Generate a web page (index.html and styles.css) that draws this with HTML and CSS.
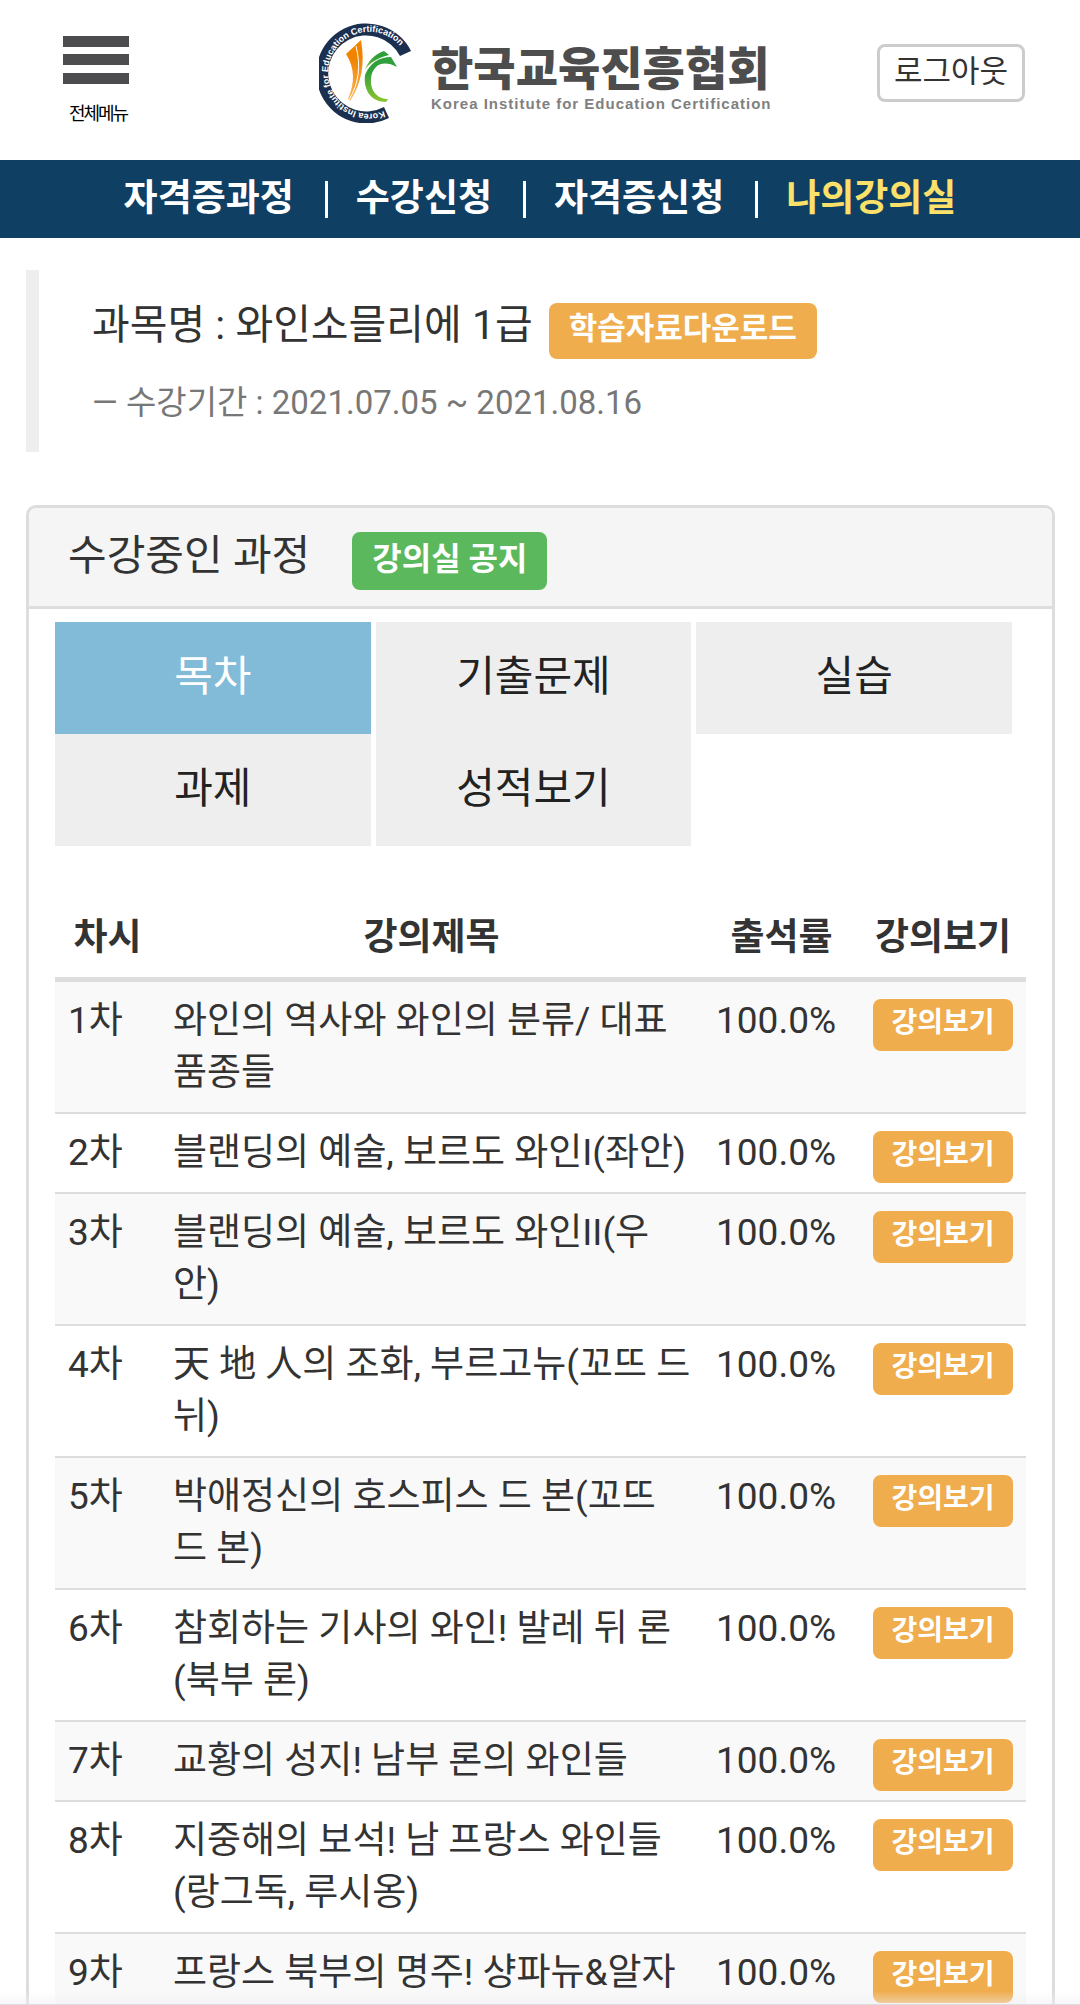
FILE: index.html
```
<!DOCTYPE html>
<html lang="ko">
<head>
    <meta charset="UTF-8">
    <meta name="viewport" content="width=device-width, initial-scale=1.0">
    <title>한국교육진흥협회</title>
    <link rel="stylesheet" href="styles.css">
</head>
<body>

<header class="header">
    <button type="button" class="menu-btn">
        <svg class="menu-icon" viewBox="0 0 66 48" aria-hidden="true">
            <path d="M0 0h66v11H0zM0 18h66v11H0zM0 37h66v11H0z" fill="#4d4d4f"/>
        </svg>
        <span>전체메뉴</span>
    </button>

    <a href="#" class="logo">
        <svg class="logo-mark" viewBox="0 0 92 100" aria-hidden="true">
            <defs>
                <linearGradient id="orange" x1="0" y1="0" x2="0" y2="1">
                    <stop offset="0.3" stop-color="#f08300"/>
                    <stop offset="1" stop-color="#fbb75c"/>
                </linearGradient>
                <linearGradient id="green" x1="0" y1="0" x2="0" y2="1">
                    <stop offset="0.3" stop-color="#2e9f3b"/>
                    <stop offset="1" stop-color="#8cc52f"/>
                </linearGradient>
                <path id="ring-text" d="M65 88A41 41 0 1 1 86 30"/>
            </defs>
            <path d="M92 28A50 50 0 1 0 70 95L65 84A38 38 0 1 1 81 33Z" fill="#1b2f4e"/>
            <text class="ring-label"><textPath href="#ring-text">Korea Institute for Education Certification</textPath></text>
            <path d="M27 31L42 17C46 40 43 60 31 78L29 76C36 60 36 45 27 31Z" fill="url(#orange)"/>
            <path d="M37 23C42 43 40 60 30 77" fill="none" stroke="#fff" stroke-width="1"/>
            <path d="M46 47C49 38 56 31 65 28L70 32C58 35 49 41 46 47Z" fill="url(#green)"/>
            <path d="M46 52C51 40 60 34 72 34L78 44C64 36 53 42 52 56C51 66 57 76 69 76L67 79C53 79 44 68 46 52Z" fill="url(#green)"/>
        </svg>
        <span class="logo-text">
            <strong>한국교육진흥협회</strong>
            <small>Korea Institute for Education Certification</small>
        </span>
    </a>

    <button type="button" class="logout-btn">로그아웃</button>
</header>

<nav class="nav">
    <a href="#">자격증과정</a>
    <a href="#">수강신청</a>
    <a href="#">자격증신청</a>
    <a href="#" class="active">나의강의실</a>
</nav>

<main>
    <blockquote class="course">
        <p>과목명 : 와인소믈리에 1급 <a href="#" class="label label-warning">학습자료다운로드</a></p>
        <footer>— 수강기간 : 2021.07.05 ~ 2021.08.16</footer>
    </blockquote>

    <section class="panel">
        <div class="panel-heading">
            <h3>수강중인 과정</h3>
            <a href="#" class="label label-success">강의실 공지</a>
        </div>
        <div class="panel-body">
            <div class="tabs">
                <button type="button" class="tab active">목차</button>
                <button type="button" class="tab">기출문제</button>
                <button type="button" class="tab">실습</button>
                <button type="button" class="tab">과제</button>
                <button type="button" class="tab">성적보기</button>
            </div>

            <table class="lectures">
                <thead>
                    <tr>
                        <th class="col-no">차시</th>
                        <th>강의제목</th>
                        <th class="col-rate">출석률</th>
                        <th class="col-view">강의보기</th>
                    </tr>
                </thead>
                <tbody>
                    <tr>
                        <td>1차</td>
                        <td>와인의 역사와 와인의 분류/ 대표 품종들</td>
                        <td>100.0%</td>
                        <td><a href="#" class="label label-warning">강의보기</a></td>
                    </tr>
                    <tr>
                        <td>2차</td>
                        <td>블랜딩의 예술, 보르도 와인I(좌안)</td>
                        <td>100.0%</td>
                        <td><a href="#" class="label label-warning">강의보기</a></td>
                    </tr>
                    <tr>
                        <td>3차</td>
                        <td>블랜딩의 예술, 보르도 와인II(우안)</td>
                        <td>100.0%</td>
                        <td><a href="#" class="label label-warning">강의보기</a></td>
                    </tr>
                    <tr>
                        <td>4차</td>
                        <td>天 地 人의 조화, 부르고뉴(꼬뜨 드 뉘)</td>
                        <td>100.0%</td>
                        <td><a href="#" class="label label-warning">강의보기</a></td>
                    </tr>
                    <tr>
                        <td>5차</td>
                        <td>박애정신의 호스피스 드 본(꼬뜨 드 본)</td>
                        <td>100.0%</td>
                        <td><a href="#" class="label label-warning">강의보기</a></td>
                    </tr>
                    <tr>
                        <td>6차</td>
                        <td>참회하는 기사의 와인! 발레 뒤 론(북부 론)</td>
                        <td>100.0%</td>
                        <td><a href="#" class="label label-warning">강의보기</a></td>
                    </tr>
                    <tr>
                        <td>7차</td>
                        <td>교황의 성지! 남부 론의 와인들</td>
                        <td>100.0%</td>
                        <td><a href="#" class="label label-warning">강의보기</a></td>
                    </tr>
                    <tr>
                        <td>8차</td>
                        <td>지중해의 보석! 남 프랑스 와인들(랑그독, 루시옹)</td>
                        <td>100.0%</td>
                        <td><a href="#" class="label label-warning">강의보기</a></td>
                    </tr>
                    <tr>
                        <td>9차</td>
                        <td>프랑스 북부의 명주! 샹파뉴&amp;알자</td>
                        <td>100.0%</td>
                        <td><a href="#" class="label label-warning">강의보기</a></td>
                    </tr>
                </tbody>
            </table>
        </div>
    </section>
</main>

<div class="bottom-shade"></div>

</body>
</html>
```
FILE: styles.css
```
* {
    padding: 0;
    margin: 0;
    box-sizing: border-box;
}
body {
    font-family: Roboto, "Noto Sans CJK KR", sans-serif;
    font-size: 37px;
    line-height: 52px;
    color: #333;
    background-color: #fff;
}
a {
    color: inherit;
    text-decoration: none;
}
button {
    font-family: inherit;
    border: none;
    background: none;
    cursor: pointer;
}

/* header */
.header {
    display: flex;
    align-items: flex-start;
    height: 160px;
    padding: 23px 55px 0 63px;
}
.menu-btn {
    width: 70px;
    padding-top: 13px;
    font-size: 18px;
    line-height: 26px;
    letter-spacing: -2px;
    white-space: nowrap;
}
.menu-icon {
    display: block;
    width: 66px;
    height: 48px;
    margin-bottom: 17px;
}
.logo {
    display: flex;
    gap: 20px;
    margin: 0 auto 0 186px;
}
.logo-mark {
    width: 92px;
    height: 100px;
}
.ring-label {
    font-family: "Liberation Sans", sans-serif;
    font-size: 9px;
    font-weight: bold;
    fill: #fff;
}
.logo-text {
    padding-top: 20px;
    color: #4d4d4d;
}
.logo-text strong,
.logo-text small {
    display: block;
    white-space: nowrap;
}
.logo-text strong {
    font-size: 46px;
    font-weight: 900;
    line-height: 52px;
}
.logo-text small {
    font-family: "Liberation Sans", sans-serif;
    font-size: 15px;
    font-weight: bold;
    line-height: 18px;
    letter-spacing: 1px;
    color: #808080;
}
.logout-btn {
    margin-top: 21px;
    padding: 2px 14px 4px;
    font-size: 31px;
    line-height: 46px;
    color: #333;
    border: 3px solid #ccc;
    border-radius: 8px;
}

/* main menu */
.nav {
    display: flex;
    justify-content: center;
    align-items: flex-start;
    height: 78px;
    padding-top: 13px;
    background-color: #0f4063;
    color: #fff;
    font-weight: bold;
}
.nav a {
    display: flex;
}
.nav a + a::before {
    content: "";
    width: 3px;
    height: 37px;
    margin: 8px 28px 0 31px;
    background-color: #fff;
}
.nav .active {
    color: #fbe06a;
}

main {
    padding: 32px 25px 32px 26px;
}

/* labels */
.label {
    display: inline-block;
    padding: 2px 20px 6px;
    font-size: 28px;
    font-weight: bold;
    line-height: 44px;
    color: #fff;
    white-space: nowrap;
    border-radius: 8px;
}
.label-warning {
    background-color: #f0ad4e;
}
.label-success {
    background-color: #5cb85c;
}

/* course info */
.course {
    padding: 26px 53px;
    margin-bottom: 53px;
    border-left: 13px solid #eee;
}
.course p {
    display: flex;
    align-items: flex-start;
    gap: 16px;
    margin-bottom: 21px;
    font-size: 41px;
    line-height: 58px;
}
.course .label {
    margin-top: 7px;
    font-size: 31px;
    line-height: 48px;
}
.course footer {
    font-size: 33px;
    line-height: 46px;
    color: #777;
}

/* panel */
.panel {
    border: 3px solid #ddd;
    border-radius: 10px;
}
.panel-heading {
    display: flex;
    align-items: flex-start;
    gap: 42px;
    padding: 18px 39px 16px;
    background-color: #f5f5f5;
    border-bottom: 3px solid #ddd;
    border-radius: 8px 8px 0 0;
}
.panel-heading h3 {
    font-size: 42px;
    font-weight: normal;
    line-height: 60px;
}
.panel-heading .label {
    margin-top: 6px;
    font-size: 32px;
    line-height: 50px;
}
.panel-body {
    padding: 13px 26px;
}

/* tabs */
.tabs {
    display: grid;
    grid-template-columns: repeat(3, 1fr);
    column-gap: 5px;
    margin: 0 14px 53px 0;
}
.tab {
    padding: 26px 0 28px;
    font-size: 42px;
    line-height: 58px;
    color: #222;
    background-color: #eee;
}
.tab.active {
    color: #fff;
    background-color: #82bbd8;
}

/* lecture list */
.lectures {
    width: 100%;
    table-layout: fixed;
    border-spacing: 0;
}
.lectures th {
    padding: 13px 0;
    border-bottom: 5px solid #ddd;
}
.lectures td {
    padding: 13px 8px 13px 13px;
    vertical-align: top;
    border-bottom: 2px solid #ddd;
}
.lectures td:last-child {
    padding: 17px 13px 9px;
}
.lectures tbody tr:nth-child(odd) {
    background-color: #f9f9f9;
}
.lectures .label {
    display: block;
    padding: 2px 0 6px;
    text-align: center;
}
.col-no {
    width: 105px;
}
.col-rate {
    width: 157px;
}
.col-view {
    width: 166px;
}

/* edge of the browser toolbar */
.bottom-shade {
    position: fixed;
    left: 0;
    right: 0;
    bottom: 0;
    height: 14px;
    border-bottom: 1px solid #ddd;
    background: linear-gradient(rgba(240, 240, 245, 0), rgba(240, 240, 245, 0.5));
}
```
